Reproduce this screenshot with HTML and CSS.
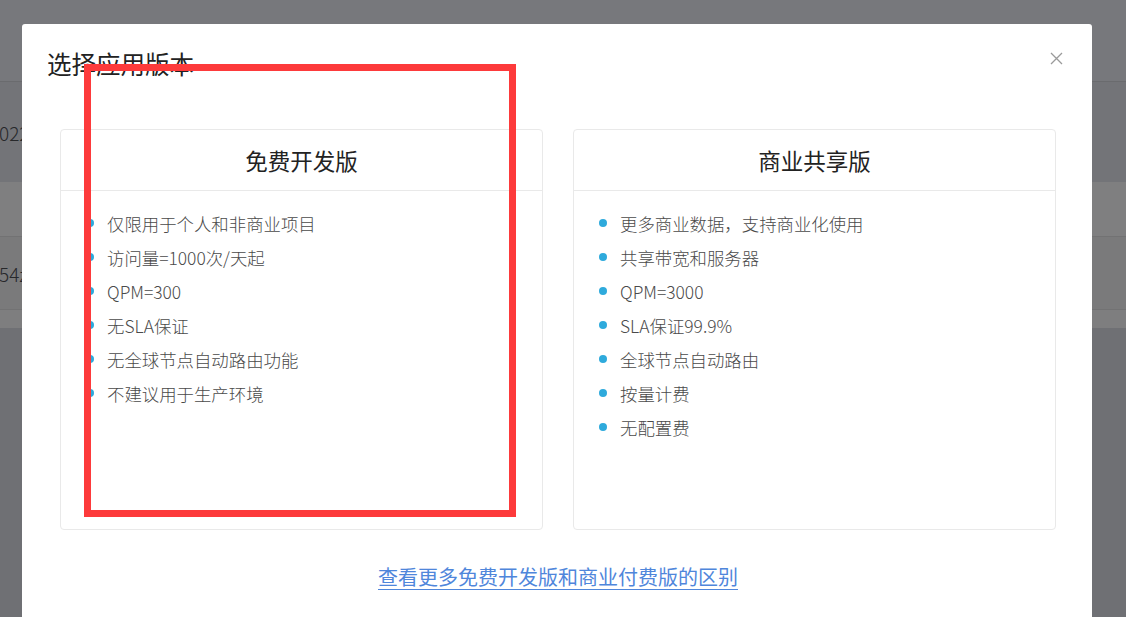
FILE: index.html
```html
<!DOCTYPE html>
<html lang="zh-CN">
<head>
<meta charset="utf-8">
<title>选择应用版本</title>
<link rel="stylesheet" href="styles.css">
</head>
<body>
<div class="page">
  <div class="topbar"></div>
  <div class="row row-a"><span class="cell">022</span></div>
  <div class="row row-b"></div>
  <div class="row row-c"><span class="cell">54z</span></div>
  <div class="row row-d"></div>
  <div class="rest"></div>
</div>

<div class="modal">
  <h2 class="modal-title">选择应用版本</h2>
  <button class="close" aria-label="关闭">
    <svg width="13" height="13" viewBox="0 0 13 13"><path d="M1 1L12 12M12 1L1 12" stroke="#9a9a9a" stroke-width="1.3" fill="none"/></svg>
  </button>
  <div class="plans">
    <div class="plan">
      <div class="plan-head">免费开发版</div>
      <ul class="plan-list">
        <li>仅限用于个人和非商业项目</li>
        <li>访问量=1000次/天起</li>
        <li>QPM=300</li>
        <li>无SLA保证</li>
        <li>无全球节点自动路由功能</li>
        <li>不建议用于生产环境</li>
      </ul>
    </div>
    <div class="plan">
      <div class="plan-head">商业共享版</div>
      <ul class="plan-list">
        <li>更多商业数据，支持商业化使用</li>
        <li>共享带宽和服务器</li>
        <li>QPM=3000</li>
        <li>SLA保证99.9%</li>
        <li>全球节点自动路由</li>
        <li>按量计费</li>
        <li>无配置费</li>
      </ul>
    </div>
  </div>
  <div class="more"><a class="more-link" href="#">查看更多免费开发版和商业付费版的区别</a></div>
</div>

<div class="annotation"></div>
</body>
</html>
```

FILE: styles.css
```css
html, body {
  margin: 0;
  padding: 0;
  height: 100%;
  overflow: hidden;
  font-family: "Noto Sans CJK SC", "Noto Sans", sans-serif;
}

.page {
  display: flex;
  flex-direction: column;
  height: 617px;
  background: #6f7074;
}

.topbar {
  height: 81px;
  background: #77787c;
  border-bottom: 1px solid #6a6b6e;
}

.row {
  display: flex;
  align-items: center;
  color: #27282b;
  font-size: 19px;
  font-weight: 300;
}

.cell {
  margin-left: -1px;
}

.row-a {
  height: 100px;
  background: #737478;
}

.row-b {
  height: 54px;
  background: #7f7f80;
  border-bottom: 1px solid #727273;
}

.row-c {
  height: 72px;
  background: #7a7a7b;
  border-bottom: 1px solid #727273;
}

.row-d {
  height: 18px;
  background: #7e7e7f;
}

.rest {
  flex: 1;
  background: #6f7074;
}

.modal {
  position: fixed;
  left: 22px;
  top: 24px;
  width: 1070px;
  height: 610px;
  background: #ffffff;
  border-radius: 3px;
  box-sizing: border-box;
  padding: 24px 36px 0 38px;
}

.modal-title {
  margin: 0 0 49px -13px;
  font-size: 24.5px;
  font-weight: 400;
  line-height: 32px;
  color: #222222;
}

.close {
  position: absolute;
  right: 29px;
  top: 28px;
  padding: 0;
  border: 0;
  background: transparent;
  width: 13px;
  height: 13px;
  line-height: 0;
}

.plans {
  display: grid;
  grid-template-columns: 1fr 1fr;
  column-gap: 30px;
}

.plan {
  height: 401px;
  box-sizing: border-box;
  border: 1px solid #e9e9e9;
  border-radius: 4px;
}

.plan-head {
  height: 60px;
  line-height: 60px;
  text-align: center;
  font-size: 22.5px;
  color: #222222;
  border-bottom: 1px solid #e9e9e9;
}

.plan-list {
  list-style: none;
  margin: 0;
  padding: 15px 0 0 25px;
}

.plan-list li {
  display: flex;
  align-items: center;
  height: 34px;
  font-size: 17.4px;
  font-weight: 300;
  color: #4a4a4a;
}

.plan-list li::before {
  content: "";
  width: 8px;
  height: 8px;
  border-radius: 50%;
  background: #2eaadc;
  margin-right: 13px;
  flex: none;
}

.more {
  margin-top: 35px;
  text-align: center;
}

.more-link {
  display: inline-block;
  font-size: 20px;
  line-height: 24px;
  color: #4f86db;
  text-decoration: none;
  border-bottom: 1px solid #4f86db;
}

.annotation {
  position: fixed;
  left: 84px;
  top: 64px;
  width: 432px;
  height: 453px;
  box-sizing: border-box;
  border: 7px solid #fd3a3b;
  pointer-events: none;
}
```
